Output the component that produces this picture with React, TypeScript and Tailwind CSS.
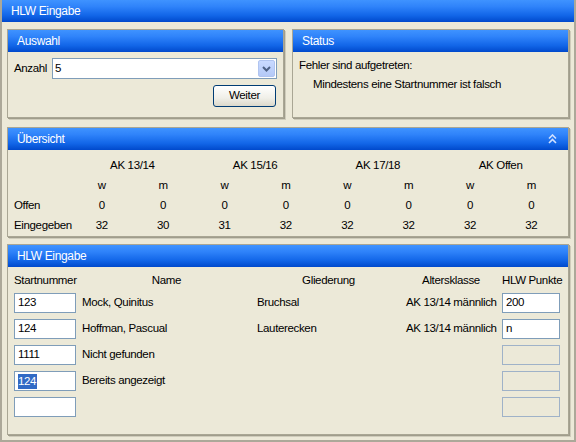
import React from 'react';

const headerBg =
  'bg-[linear-gradient(to_bottom,#3f93ff_0%,#2f83fa_30%,#1266e8_70%,#0049cc_100%)]';

const ChevronDown = () => (
  <svg width="9" height="6" viewBox="0 0 9 6">
    <path d="M1 1 L4.5 4.5 L8 1" fill="none" stroke="#4d6185" strokeWidth="2" />
  </svg>
);

const CollapseUp = () => (
  <svg width="9" height="10" viewBox="0 0 9 10">
    <path d="M1 4.5 L4.5 1 L8 4.5 M1 9 L4.5 5.5 L8 9" fill="none" stroke="#cfe0ff" strokeWidth="1.6" />
  </svg>
);

interface PanelProps {
  title: string;
  right?: React.ReactNode;
  className?: string;
  children: React.ReactNode;
}

const Panel: React.FC<PanelProps> = ({ title, right, className = '', children }) => (
  <div className={`border border-[#a9a694] shadow-[1px_1px_0_#a09d8c,2px_2px_0_#cfccbb] ${className}`}>
    <div className={`h-[22px] flex items-center justify-between pl-[9px] pr-[11px] text-white text-[12px] ${headerBg}`}>
      <span>{title}</span>
      {right}
    </div>
    {children}
  </div>
);

const Field = ({ value, selected, disabled, w }: { value?: string; selected?: boolean; disabled?: boolean; w: string }) => (
  <div className={`${w} h-[20px] border ${disabled ? 'border-[#9fb2c8] bg-transparent' : 'border-[#7f9db9] bg-white'} flex items-center pl-[3px]`}>
    {selected ? (
      <span className="bg-[#316ac5] text-white leading-[15px] pr-px">{value}</span>
    ) : (
      <span>{value}</span>
    )}
  </div>
);

const groups = ['AK 13/14', 'AK 15/16', 'AK 17/18', 'AK Offen'];
const offen = [0, 0, 0, 0, 0, 0, 0, 0];
const eingegeben = [32, 30, 31, 32, 32, 32, 32, 32];

const rows = [
  { nr: '123', name: 'Mock, Quinitus', glied: 'Bruchsal', ak: 'AK 13/14 männlich', pts: '200' },
  { nr: '124', name: 'Hoffman, Pascual', glied: 'Lauterecken', ak: 'AK 13/14 männlich', pts: 'n' },
  { nr: '1111', name: 'Nicht gefunden', glied: '', ak: '', pts: null },
  { nr: '124', name: 'Bereits angezeigt', glied: '', ak: '', pts: null, selected: true },
  { nr: '', name: '', glied: '', ak: '', pts: null },
];

export default function App() {
  return (
    <div
      className="w-[576px] h-[442px] bg-[#ece9d8] text-black text-[11.5px] tracking-[-0.35px] border-x-2 border-b-2 border-[#aca899] overflow-hidden"
      style={{ fontFamily: '"Liberation Sans", Arial, sans-serif' }}
    >
      {/* Window title */}
      <div className={`h-[22px] flex items-center pl-[9px] text-white text-[12px] -mx-[2px] ${headerBg}`}>
        <span className="pl-[2px]">HLW Eingabe</span>
      </div>

      <div className="px-[5px] pt-[7px]">
        <div className="grid grid-cols-[277px_1fr] gap-[8px]">
          <Panel title="Auswahl" className="h-[89px]">
            <div className="px-[6px] pt-[6px]">
              <div className="flex items-center gap-[5px]">
                <span>Anzahl</span>
                <div className="flex-1 h-[21px] border border-[#7f9db9] bg-white flex items-center justify-between pl-[2px] pr-px">
                  <span>5</span>
                  <div className="w-[17px] h-[17px] rounded-[2px] bg-[linear-gradient(to_bottom,#c9daff,#b4c9f7)] border border-[#b0c4f0] flex items-center justify-center">
                    <ChevronDown />
                  </div>
                </div>
              </div>
              <div className="flex justify-end mt-[6px] pr-px">
                <button className="w-[63px] h-[22px] rounded-[3px] border border-[#003c74] bg-[linear-gradient(to_bottom,#ffffff,#f0efe8_60%,#dcd9cb)] text-black">
                  Weiter
                </button>
              </div>
            </div>
          </Panel>

          <Panel title="Status" className="h-[89px]">
            <div className="pt-[4px] pl-[6px] leading-[19px]">
              <div>Fehler sind aufgetreten:</div>
              <div className="pl-[14px]">Mindestens eine Startnummer ist falsch</div>
            </div>
          </Panel>
        </div>

        <Panel title="Übersicht" right={<CollapseUp />} className="mt-[9px]">
          <div className="grid grid-cols-[57px_repeat(8,1fr)] px-[6px] pt-[5px] pb-px leading-[20px]">
            <div />
            {groups.map(g => (
              <div key={g} className="col-span-2 text-center">{g}</div>
            ))}
            <div />
            {groups.map(g => (
              <React.Fragment key={g}>
                <div className="text-center">w</div>
                <div className="text-center">m</div>
              </React.Fragment>
            ))}
            <div>Offen</div>
            {offen.map((v, i) => (
              <div key={i} className="text-center">{v}</div>
            ))}
            <div>Eingegeben</div>
            {eingegeben.map((v, i) => (
              <div key={i} className="text-center">{v}</div>
            ))}
          </div>
        </Panel>

        <Panel title="HLW Eingabe" className="mt-[7px] h-[191px]">
          <div className="grid grid-cols-[62px_169px_143px_90px_58px] gap-x-[6px] px-[6px] pt-[4px]">
            <div className="h-[18px] leading-[18px]">Startnummer</div>
            <div className="h-[18px] leading-[18px] text-center">Name</div>
            <div className="h-[18px] leading-[18px] text-center">Gliederung</div>
            <div className="h-[18px] leading-[18px] text-center">Altersklasse</div>
            <div className="h-[18px] leading-[18px] text-center whitespace-nowrap">HLW Punkte</div>
          </div>
          <div className="flex flex-col gap-[6px] px-[6px] pt-[4px]">
            {rows.map((r, i) => (
              <div key={i} className="grid grid-cols-[62px_169px_143px_90px_58px] gap-x-[6px] items-center h-[20px]">
                <Field w="w-[62px]" value={r.nr} selected={r.selected} />
                <div>{r.name}</div>
                <div>{r.glied}</div>
                <div className="text-right whitespace-nowrap">{r.ak}</div>
                <Field w="w-[58px]" value={r.pts ?? ''} disabled={r.pts === null} />
              </div>
            ))}
          </div>
        </Panel>
      </div>
    </div>
  );
}
